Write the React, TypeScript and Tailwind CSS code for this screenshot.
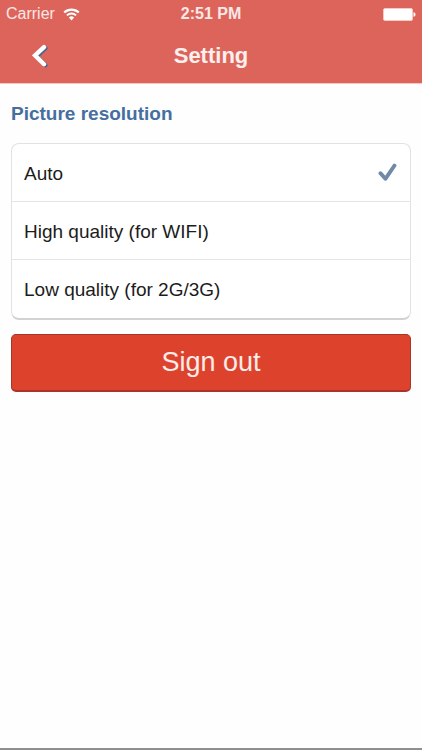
import { useState } from "react";

const RESOLUTIONS = [
  { id: "auto", label: "Auto" },
  { id: "high", label: "High quality (for WIFI)" },
  { id: "low", label: "Low quality (for 2G/3G)" },
];

function WifiIcon() {
  return (
    <svg width="17" height="13" viewBox="0 0 17 13" fill="none" aria-hidden="true">
      <path d="M1.2 4.6a10.4 10.4 0 0 1 14.6 0" stroke="#fff" strokeWidth="2.1" />
      <path d="M3.9 7.4a6.5 6.5 0 0 1 9.2 0" stroke="#fff" strokeWidth="1.9" />
      <path d="M8.5 12.4 5.9 9.5a3.8 3.8 0 0 1 5.2 0z" fill="#fff" />
    </svg>
  );
}

function BatteryIcon() {
  return (
    <svg width="33" height="13" viewBox="0 0 33 13" aria-hidden="true">
      <rect x="0.5" y="0.5" width="29" height="12" rx="1.5" fill="#fff" stroke="#f6c9c5" />
      <path d="M30.5 4.2c1.4.3 2 1.2 2 2.3s-.6 2-2 2.3z" fill="#fff" />
    </svg>
  );
}

function BackIcon() {
  return (
    <svg width="17" height="24" viewBox="0 0 17 24" fill="none" strokeLinecap="round" aria-hidden="true">
      <path d="M13.4 4.2 4.5 12.4l8.9 8.8" stroke="#3b6790" strokeWidth="4.2" />
      <path d="M12 3.2 3 11.4l9 8.8" stroke="#fff" strokeWidth="4.4" />
    </svg>
  );
}

function CheckIcon() {
  return (
    <svg
      width="20"
      height="19"
      viewBox="0 0 20 19"
      fill="none"
      className="hidden peer-checked:block"
      aria-hidden="true"
    >
      <path
        d="M2.5 10.2 7.4 15.8 16.5 2.5"
        stroke="#7189a9"
        strokeWidth="3.9"
        strokeLinecap="round"
        strokeLinejoin="round"
      />
    </svg>
  );
}

function StatusBar() {
  return (
    <div className="grid h-7 grid-cols-3 items-center px-1.5 text-base text-white/85">
      <div className="flex items-center gap-2">
        <span>Carrier</span>
        <WifiIcon />
      </div>
      <span className="text-center font-bold">2:51 PM</span>
      <div className="flex justify-end">
        <BatteryIcon />
      </div>
    </div>
  );
}

function NavBar() {
  return (
    <div className="grid h-[55px] grid-cols-3 items-center px-8">
      <button type="button" aria-label="Back" className="justify-self-start">
        <BackIcon />
      </button>
      <h1 className="text-center text-[22px] font-bold text-white/90">Setting</h1>
    </div>
  );
}

export default function App() {
  const [resolution, setResolution] = useState("auto");

  return (
    <div className="flex min-h-screen flex-col border-b-2 border-[#8f8f8f] bg-[#fefefe] font-['Liberation_Sans',Arial,sans-serif]">
      <header className="border-b border-[#f5c5c2] bg-[#dd645a]">
        <StatusBar />
        <NavBar />
      </header>

      <main className="flex-1 px-[11px] pt-4">
        <h2 id="resolution-title" className="text-[19px] leading-7 font-bold text-[#456f9e]">
          Picture resolution
        </h2>

        <div
          role="radiogroup"
          aria-labelledby="resolution-title"
          className="mt-[15px] divide-y divide-[#e4e4e4] rounded-lg border border-b-2 border-[#e2e2e2] border-b-[#d2d2d2] bg-white"
        >
          {RESOLUTIONS.map((item) => (
            <label
              key={item.id}
              htmlFor={item.id}
              className="flex h-[58px] items-center px-3 text-[19px] text-[#1c1c1c]"
            >
              <span className="flex-1 pt-[3px]">{item.label}</span>
              <input
                id={item.id}
                type="radio"
                name="resolution"
                className="peer appearance-none"
                checked={resolution === item.id}
                onChange={() => setResolution(item.id)}
              />
              <CheckIcon />
            </label>
          ))}
        </div>

        <button
          type="button"
          className="mt-3.5 h-[58px] w-full rounded-[5px] border border-b-2 border-[#a9352a] bg-[#dd422d] text-[27px] text-white/90"
        >
          Sign out
        </button>
      </main>
    </div>
  );
}
